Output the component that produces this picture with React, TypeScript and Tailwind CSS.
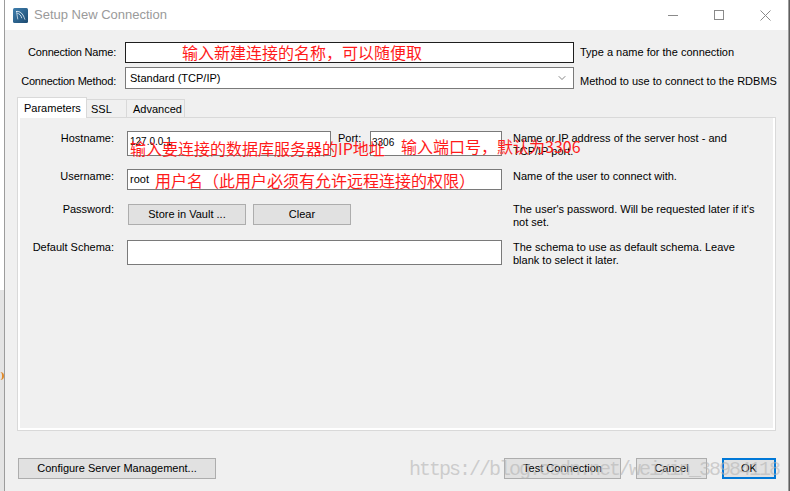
import { ChevronDown } from 'lucide-react';

function WorkbenchIcon() {
  return (
    <svg width="15" height="15" viewBox="0 0 15 15">
      <defs>
        <linearGradient id="wb" x1="0" y1="0" x2="1" y2="1">
          <stop offset="0" stopColor="#3f7fae" />
          <stop offset="1" stopColor="#1c4a70" />
        </linearGradient>
      </defs>
      <rect x="0" y="0" width="15" height="15" rx="1.5" fill="url(#wb)" />
      <path d="M3 3.5c3.2-.6 6.2 1.4 7.8 5.2" stroke="#e8f1f8" strokeWidth="1" fill="none" />
      <path d="M4.2 5.2c2 .3 3.9 2.2 4.6 5" stroke="#e8f1f8" strokeWidth="0.8" fill="none" />
      <path d="M3.6 4.2l1.2 7.2M10.8 8.7l1.2 3" stroke="#e8f1f8" strokeWidth="0.7" fill="none" />
    </svg>
  );
}

function Btn({ label, w, primary }: { label: string; w: string; primary?: boolean }) {
  return (
    <button
      className={`${w} h-[21px] bg-[#e1e1e1] text-[11px] text-black flex items-center justify-center ${
        primary ? 'border-2 border-[#0078d7]' : 'border border-[#adadad]'
      }`}
    >
      {label}
    </button>
  );
}

export default function App() {
  return (
    <div className="relative w-[790px] h-[491px] overflow-hidden flex bg-white font-['Liberation_Sans',sans-serif] text-[11px] text-black">
      {/* desktop peeking out on the left */}
      <div className="w-[4px] flex flex-col">
        <div className="h-[290px] bg-white" />
        <div className="flex-1 bg-[#e4e4e4] pt-[82px]">
          <div className="w-[4px] h-[8px] rounded-r-full border-r-2 border-[#e08a2a]" />
        </div>
      </div>

      <div className="flex-1 flex flex-col border-l border-r border-[#9c9c9c] bg-[#f0f0f0]">
        {/* title bar */}
        <div className="h-[30px] bg-white flex items-center shrink-0">
          <div className="pl-[8px] flex items-center">
            <WorkbenchIcon />
          </div>
          <span className="ml-[6px] text-[13px] text-[#9a9a9a]">Setup New Connection</span>
          <div className="ml-auto flex h-full">
            <div className="w-[46px] flex items-center justify-center">
              <div className="w-[10px] h-px bg-[#8a8a8a]" />
            </div>
            <div className="w-[46px] flex items-center justify-center">
              <div className="w-[10px] h-[10px] border border-[#8a8a8a]" />
            </div>
            <div className="w-[46px] flex items-center justify-center">
              <svg width="11" height="11" viewBox="0 0 11 11">
                <path d="M0.5 0.5l10 10M10.5 0.5l-10 10" stroke="#8a8a8a" strokeWidth="1" />
              </svg>
            </div>
          </div>
        </div>

        {/* body */}
        <div className="flex-1 flex flex-col pt-[12px]">
          <div className="flex items-center h-[21px]">
            <div className="w-[111px] text-right tracking-[-0.2px]">Connection Name:</div>
            <div className="ml-[9px] w-[449px] h-[21px] border border-[#1e1e1e] bg-white" />
            <div className="ml-[6px]">Type a name for the connection</div>
          </div>

          <div className="flex items-start h-[22px] mt-[4px]">
            <div className="w-[111px] text-right pt-[8px] leading-[13px] tracking-[-0.2px]">Connection Method:</div>
            <div className="ml-[9px] w-[449px] h-[22px] border border-[#7a7a7a] bg-white flex items-center pl-[4px] pr-[5px]">
              <span>Standard (TCP/IP)</span>
              <ChevronDown className="ml-auto w-[12px] h-[12px] text-[#444]" strokeWidth={1.3} />
            </div>
            <div className="ml-[6px] pt-[8px] leading-[13px]">Method to use to connect to the RDBMS</div>
          </div>

          {/* tabs */}
          <div className="flex items-start h-[20px] mt-[8px] ml-[12px]">
            <div className="relative z-10 w-[70px] h-[21px] bg-white border border-b-0 border-[#d9d9d9] pl-[6px] pt-[2px]">
              Parameters
            </div>
            <div className="mt-[2px] w-[40px] h-[18px] border border-l-0 border-b-0 border-[#d9d9d9] pl-[4px] pt-[1px]">
              SSL
            </div>
            <div className="mt-[2px] w-[58px] h-[18px] border border-l-0 border-b-0 border-[#d9d9d9] pl-[6px] pt-[1px]">
              Advanced
            </div>
          </div>

          <div className="ml-[12px] mr-[12px] h-[314px] border border-[#d9d9d9]">
            <div className="h-full border-x-2 border-b-2 border-white pt-[13px] flex flex-col">
              <div className="flex items-start h-[25px]">
                <div className="w-[94px] text-right pt-[1px] leading-[13px]">Hostname:</div>
                <div className="ml-[13px] w-[375px] flex items-start">
                  <div className="w-[204px] h-[25px] border border-[#7a7a7a] bg-white pl-[2px] pt-[2px] text-[10px]">
                    127.0.0.1
                  </div>
                  <div className="ml-[7px] pt-[1px] leading-[13px]">Port:</div>
                  <div className="ml-auto w-[132px] h-[25px] border border-[#7a7a7a] bg-white pl-[1px] pt-[3px] text-[10px]">
                    3306
                  </div>
                </div>
                <div className="ml-[11px] pt-[1px] leading-[13px]">
                  Name or IP address of the server host - and
                  <br />
                  TCP/IP port.
                </div>
              </div>

              <div className="flex items-start h-[21px] mt-[13px]">
                <div className="w-[94px] text-right pt-[1px] leading-[13px]">Username:</div>
                <div className="ml-[13px] w-[375px] h-[21px] border border-[#7a7a7a] bg-white flex items-center pl-[2px]">
                  root
                </div>
                <div className="ml-[11px] pt-[1px] leading-[13px]">Name of the user to connect with.</div>
              </div>

              <div className="flex items-start h-[21px] mt-[14px]">
                <div className="w-[94px] text-right -mt-[1px] leading-[13px]">Password:</div>
                <div className="ml-[14px] w-[374px] flex gap-[7px]">
                  <Btn label="Store in Vault ..." w="w-[118px]" />
                  <Btn label="Clear" w="w-[98px]" />
                </div>
                <div className="ml-[11px] -mt-[1px] leading-[13px]">
                  The user's password. Will be requested later if it's
                  <br />
                  not set.
                </div>
              </div>

              <div className="flex items-start h-[25px] mt-[15px]">
                <div className="w-[94px] text-right pt-[1px] leading-[13px]">Default Schema:</div>
                <div className="ml-[13px] w-[375px] h-[25px] border border-[#7a7a7a] bg-white" />
                <div className="ml-[11px] pt-[1px] leading-[13px]">
                  The schema to use as default schema. Leave
                  <br />
                  blank to select it later.
                </div>
              </div>
            </div>
          </div>

          {/* dialog buttons */}
          <div className="flex mt-[27px]">
            <div className="ml-[13px]">
              <Btn label="Configure Server Management..." w="w-[198px]" />
            </div>
            <div className="ml-auto mr-[12px] flex gap-[15px]">
              <Btn label="Test Connection" w="w-[117px]" />
              <Btn label="Cancel" w="w-[71px]" />
              <Btn label="OK" w="w-[54px]" primary />
            </div>
          </div>
        </div>
      </div>
      <div className="w-[1px] bg-[#5e5e5e]" />

      {/* red annotations */}
      <div className="absolute left-[182px] top-[42px] text-[16px] leading-[20px] text-[#ff1a1a] font-['Noto_Sans_CJK_SC',sans-serif]">
        输入新建连接的名称，可以随便取
      </div>
      <div className="absolute left-[130px] top-[138px] text-[16px] leading-[20px] text-[#ff1a1a] font-['Noto_Sans_CJK_SC',sans-serif]">
        输入要连接的数据库服务器的IP地址
      </div>
      <div className="absolute left-[401px] top-[136px] text-[16px] leading-[20px] text-[#ff1a1a] font-['Noto_Sans_CJK_SC',sans-serif]">
        输入端口号，默认为3306
      </div>
      <div className="absolute left-[155px] top-[170px] text-[16px] leading-[20px] text-[#ff1a1a] font-['Noto_Sans_CJK_SC',sans-serif]">
        用户名（此用户必须有允许远程连接的权限）
      </div>

      {/* watermark */}
      <div className="absolute left-[409px] top-[458px] text-[20px] leading-[24px] tracking-[-2px] text-[#b4b4b4]/60 font-['Liberation_Mono',monospace] pointer-events-none">
        https://blog.csdn.net/weixin_38984118
      </div>
    </div>
  );
}
